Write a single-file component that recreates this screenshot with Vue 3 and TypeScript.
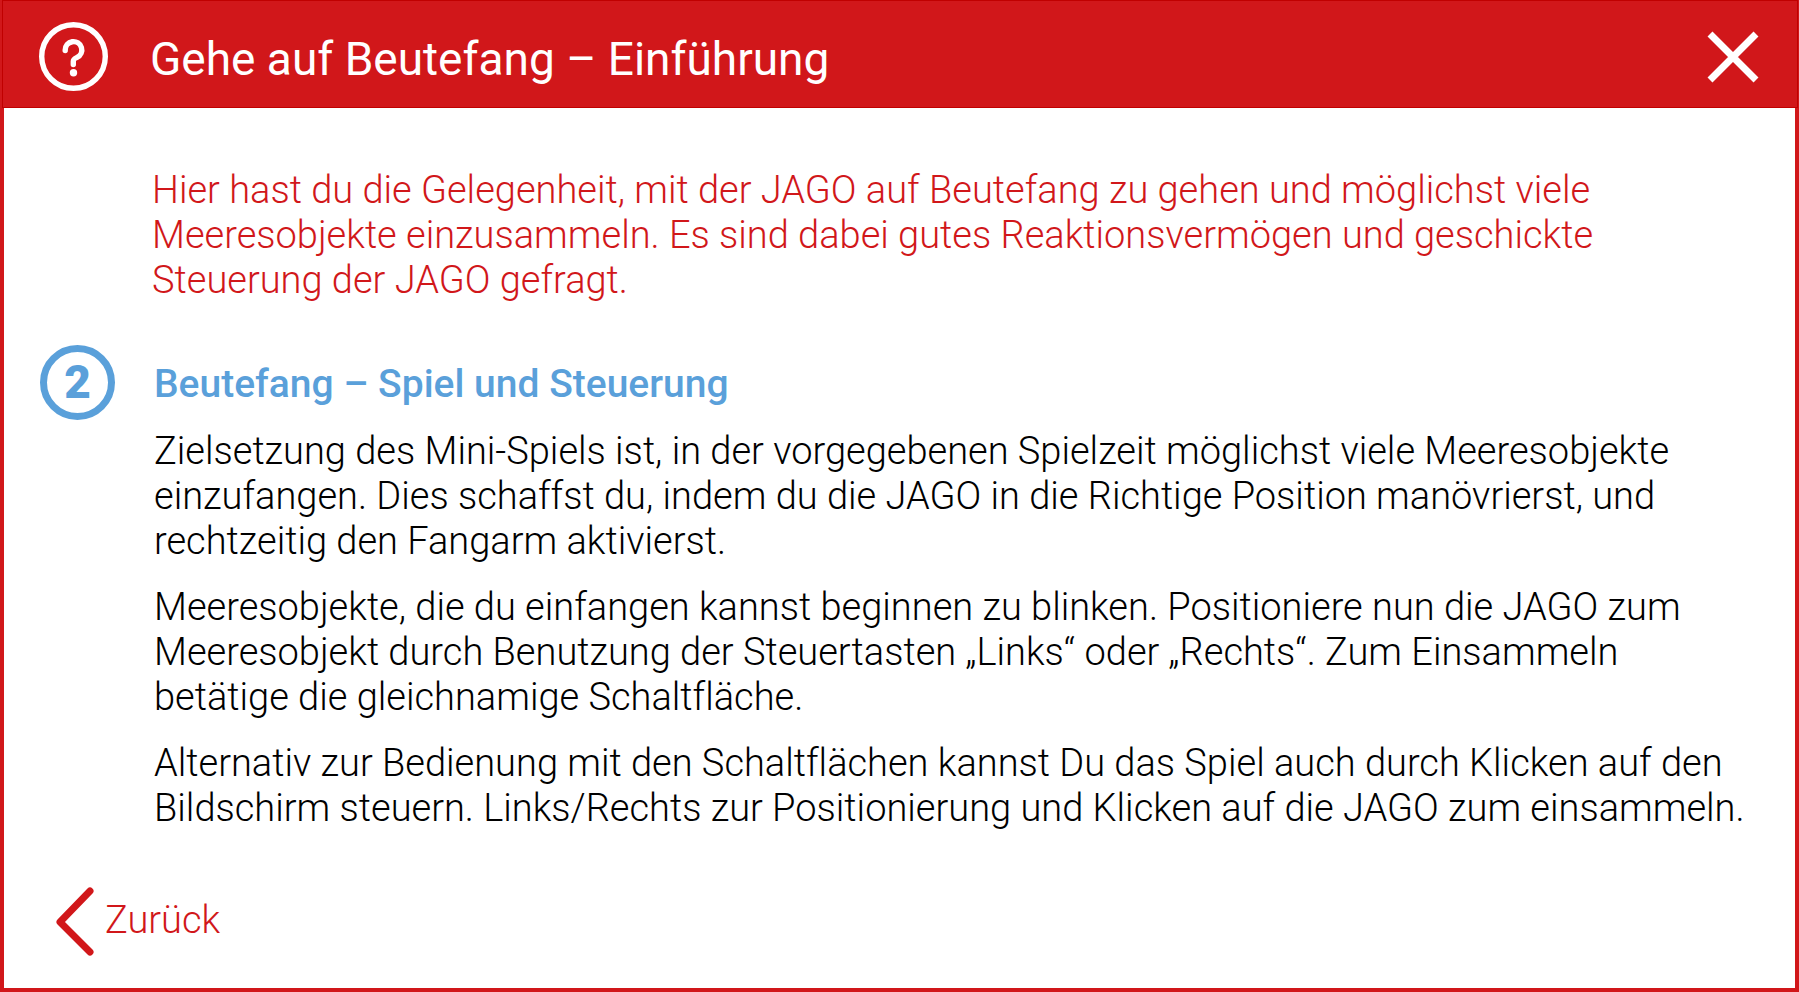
<script setup lang="ts">
interface Step {
  number: number
  heading: string
  paragraphs: string[][]
}

const title = 'Gehe auf Beutefang – Einführung'

const intro: string[] = [
  'Hier hast du die Gelegenheit, mit der JAGO auf Beutefang zu gehen und möglichst viele',
  'Meeresobjekte einzusammeln. Es sind dabei gutes Reaktionsvermögen und geschickte',
  'Steuerung der JAGO gefragt.',
]

const step: Step = {
  number: 2,
  heading: 'Beutefang – Spiel und Steuerung',
  paragraphs: [
    [
      'Zielsetzung des Mini-Spiels ist, in der vorgegebenen Spielzeit möglichst viele Meeresobjekte',
      'einzufangen. Dies schaffst du, indem du die JAGO in die Richtige Position manövrierst, und',
      'rechtzeitig den Fangarm aktivierst.',
    ],
    [
      'Meeresobjekte, die du einfangen kannst beginnen zu blinken. Positioniere nun die JAGO zum',
      'Meeresobjekt durch Benutzung der Steuertasten „Links“ oder „Rechts“. Zum Einsammeln',
      'betätige die gleichnamige Schaltfläche.',
    ],
    [
      'Alternativ zur Bedienung mit den Schaltflächen kannst Du das Spiel auch durch Klicken auf den',
      'Bildschirm steuern. Links/Rechts zur Positionierung und Klicken auf die JAGO zum einsammeln.',
    ],
  ],
}
</script>

<template>
  <section class="dialog" role="dialog" aria-labelledby="dialog-title">
    <header class="bar">
      <svg class="help" viewBox="0 0 69 69" aria-hidden="true">
        <circle cx="34.5" cy="34.5" r="31.8" fill="none" stroke="currentColor" stroke-width="5.4" />
        <path
          d="M26.2 28.6V28a8.3 8.3 0 1 1 11.9 7.4c-2.6 1.2-3.8 1.6-3.8 3.8v3.4"
          fill="none"
          stroke="currentColor"
          stroke-width="5.4"
          stroke-linecap="round"
          stroke-linejoin="round"
        />
        <circle cx="34.5" cy="50.8" r="3.7" fill="currentColor" />
      </svg>
      <h1 id="dialog-title" class="title">{{ title }}</h1>
      <button class="close" type="button" aria-label="Schließen">
        <svg viewBox="0 0 52 52" aria-hidden="true">
          <path d="M3 3l46 46M49 3L3 49" fill="none" stroke="currentColor" stroke-width="7" />
        </svg>
      </button>
    </header>

    <main class="body">
      <p class="intro">
        <span v-for="line in intro" :key="line" class="line">{{ line }}</span>
      </p>

      <article class="step">
        <span class="badge">{{ step.number }}</span>
        <h2 class="heading">{{ step.heading }}</h2>
        <div class="text">
          <p v-for="(paragraph, index) in step.paragraphs" :key="index">
            <span v-for="line in paragraph" :key="line" class="line">{{ line }}</span>
          </p>
        </div>
      </article>

      <footer class="footer">
        <button class="back" type="button">
          <svg viewBox="0 0 38 72" aria-hidden="true">
            <path
              d="M34 7L4 38l30 30"
              fill="none"
              stroke="currentColor"
              stroke-width="7"
              stroke-linecap="round"
              stroke-linejoin="round"
            />
          </svg>
          Zurück
        </button>
      </footer>
    </main>
  </section>
</template>

<style>
body {
  margin: 0;
}
</style>

<style scoped>
.dialog {
  --red: #d1171a;
  --blue: #5aa0da;
  box-sizing: border-box;
  display: flex;
  flex-direction: column;
  min-height: 100vh;
  background: var(--red);
  color: #000;
  font-family: Roboto, "Liberation Sans", sans-serif;
  font-size: 38px;
  font-weight: 300;
  font-variant-ligatures: none;
  line-height: 45px;
}

h1,
h2,
p {
  margin: 0;
}

.bar {
  box-sizing: border-box;
  display: flex;
  align-items: center;
  min-height: 108px;
  margin: 0 1px 0 2px;
  padding: 5px 38px 0 36px;
  border: 1px solid #c00000;
  color: #fff;
}

.help {
  flex: none;
  width: 69px;
  height: 69px;
}

.title {
  flex: 1;
  margin-left: 42px;
  padding-top: 4px;
  font-size: 46px;
  font-weight: 400;
  line-height: 54px;
}

.close,
.back {
  padding: 0;
  border: 0;
  background: none;
  color: inherit;
  font: inherit;
  cursor: pointer;
}

.close {
  flex: none;
  width: 52px;
  height: 52px;
}

.close svg {
  display: block;
}

.body {
  flex: 1;
  display: flex;
  flex-direction: column;
  margin: 0 4px 4px;
  padding: 60px 36px 32px;
  background: #fff;
}

.line {
  display: block;
}

.intro {
  margin-left: 112px;
  color: var(--red);
}

.step {
  display: grid;
  grid-template-columns: 75px 1fr;
  column-gap: 39px;
  margin-top: 42px;
}

.badge {
  box-sizing: border-box;
  display: flex;
  align-items: center;
  justify-content: center;
  height: 75px;
  border: 7px solid var(--blue);
  border-radius: 50%;
  color: var(--blue);
  font-size: 46px;
  font-weight: 900;
}

.heading {
  align-self: center;
  padding-top: 4px;
  color: var(--blue);
  font-size: 39px;
  font-weight: 500;
}

.text {
  grid-column: 2;
  display: flex;
  flex-direction: column;
  gap: 21px;
  margin-top: 9px;
}

.footer {
  margin-top: auto;
  padding-left: 16px;
}

.back {
  display: flex;
  align-items: center;
  gap: 11px;
  color: var(--red);
}

.back svg {
  width: 38px;
  height: 72px;
}
</style>
